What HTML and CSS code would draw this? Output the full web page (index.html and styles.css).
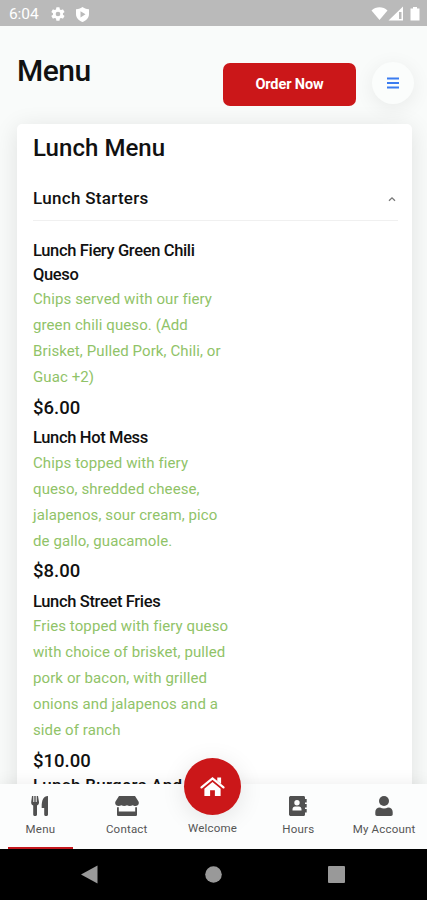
FILE: index.html
```html
<!DOCTYPE html>
<html lang="en">

<head>
    <meta charset="UTF-8">
    <meta name="viewport" content="width=device-width, initial-scale=1.0">
    <title>Menu</title>
    <link rel="stylesheet" href="styles.css">
</head>

<body>
    <div class="phone">
        <div class="status-bar">
            <span class="time">6:04</span>
            <svg class="gear" width="16" height="16" viewBox="0 0 24 24"><path fill="#fff" fill-rule="evenodd" d="M19.4 13a7.500 7.500 0 0 0 0-2l2.100-1.600a.5.5 0 0 0 .1-.7l-2-3.400a.5.5 0 0 0-.6-.2l-2.500 1a7 7 0 0 0-1.700-1l-.4-2.600a.5.5 0 0 0-.5-.5h-4a.5.5 0 0 0-.5.5L9 5.100a8 8 0 0 0-1.700 1l-2.500-1a.5.5 0 0 0-.6.2l-2 3.400a.5.5 0 0 0 .1.700L4.500 11a8 8 0 0 0 0 2l-2.200 1.600a.5.5 0 0 0-.1.700l2 3.400c.1.200.4.300.6.200l2.500-1a7 7 0 0 0 1.700 1l.4 2.600c0 .3.200.5.5.5h4c.300 0 .5-.2.5-.5l.4-2.600a8 8 0 0 0 1.700-1l2.500 1c.2.100.5 0 .6-.2l2-3.400a.5.5 0 0 0-.1-.7zM12 15.500a3.500 3.500 0 1 1 0-7 3.500 3.500 0 0 1 0 7z"/></svg>
            <svg class="shield" width="15" height="17" viewBox="0 0 15 17"><path fill="#fff" fill-rule="evenodd" d="M7.500 1C6 2.200 4 3 1 3.200V8c0 4 3 6.800 6.500 8C11 14.800 14 12 14 8V3.200C11 3 9 2.200 7.500 1zM5.500 5.200v6.200l5-3.100z"/></svg>
            <svg class="signals" width="50" height="16" viewBox="0 0 50 16">
                <path fill="#fff" d="M.5 4.500C5 .300 12 .300 16.500 4.500L8.500 14z"/>
                <path fill="#fff" d="M17.500 14.500L32 .500v14zM28 6v7h2.500V6z" fill-rule="evenodd"/>
                <path fill="#fff" d="M42 1h4v1.500h2.500v12h-9v-12H42z"/>
            </svg>
        </div>

        <div class="app">
            <header class="header">
                <h1>Menu</h1>
                <button class="order-btn">Order Now</button>
                <button class="menu-btn">
                    <svg width="12" height="12" viewBox="0 0 12 12"><path d="M0 1.500h12M0 6h12M0 10.500h12" stroke="#3a7cf0" stroke-width="1.800"/></svg>
                </button>
            </header>

            <main class="card">
                <h2>Lunch Menu</h2>
                <div class="section-title">
                    <h3>Lunch Starters</h3>
                    <svg width="8" height="6" viewBox="0 0 8 6"><path d="M1 4.800L4 1.800l3 3" fill="none" stroke="#777" stroke-width="1.300"/></svg>
                </div>
                <div class="item">
                    <h4>Lunch Fiery Green Chili<br>Queso</h4>
                    <p>Chips served with our fiery<br>green chili queso. (Add<br>Brisket, Pulled Pork, Chili, or<br>Guac +2)</p>
                    <div class="price">$6.00</div>
                </div>
                <div class="item">
                    <h4>Lunch Hot Mess</h4>
                    <p>Chips topped with fiery<br>queso, shredded cheese,<br>jalapenos, sour cream, pico<br>de gallo, guacamole.</p>
                    <div class="price">$8.00</div>
                </div>
                <div class="item">
                    <h4>Lunch Street Fries</h4>
                    <p>Fries topped with fiery queso<br>with choice of brisket, pulled<br>pork or bacon, with grilled<br>onions and jalapenos and a<br>side of ranch</p>
                    <div class="price">$10.00</div>
                </div>
                <h3 class="next-title">Lunch Burgers And</h3>
            </main>
        </div>

        <nav class="tabs">
            <a class="tab active">
                <svg width="18" height="20" viewBox="0 0 18 20"><path fill="#505050" d="M1 0h1.300v6h1V0h1.400v6h1V0H7l1 6c.2 2-.8 3-2 3.600V18.500c0 2-3.800 2-3.800 0V9.600C.8 9 0 8 .2 6zM17 0v18.500c0 2-3.800 2-3.800 0V12h-2.500C10.500 5 12 0 17 0z"/></svg>
                <span>Menu</span>
            </a>
            <a class="tab">
                <svg width="24" height="20" viewBox="0 0 24 20"><path fill="#505050" d="M4 0h16l3.500 5.500c1.200 2.500-1 4.500-3 4.500-1.300 0-2-.3-2.800-.8-1.700 1.100-4.200 1.100-5.700 0-1.600 1.100-4 1.100-5.700 0-.8.5-1.600.8-2.800.8-2 0-4.200-2-3-4.500zM2 11.300l1.800-.1V15.500h16.400v-4.300l1.800.1v7.200c0 1-.6 1.500-1.500 1.500h-17C2.600 20 2 19.500 2 18.500z"/></svg>
                <span>Contact</span>
            </a>
            <a class="tab home">
                <i class="home-circle">
                    <svg width="25" height="21" viewBox="0 0 26 22"><path d="M1.500 12L13 2.500 24.500 12" fill="none" stroke="#fff" stroke-width="2.300" stroke-linecap="round"/><path fill="#fff" d="M18 1.500h4v7l-4-3.300zM13 6.300l8.500 7V21h-6v-6h-5v6h-6v-7.700z"/></svg>
                </i>
                <span>Welcome</span>
            </a>
            <a class="tab">
                <svg width="18" height="20" viewBox="0 0 18 20"><path fill="#505050" fill-rule="evenodd" d="M2 0h12.500c1 0 1.500.7 1.500 1.500v17c0 .8-.5 1.500-1.500 1.500H2c-1.200 0-2-.7-2-1.500v-17C0 .700.800 0 2 0zM8 4a2.700 2.700 0 1 0 0 5.400A2.700 2.700 0 0 0 8 4zM3.500 14.500h9v-1c0-2-1.200-3-2.500-3H6c-1.300 0-2.500 1-2.500 3z"/><path fill="#505050" d="M16 3h1.700v3.500H16zM16 8h1.700v3.500H16zM16 13h1.700v3.500H16z"/></svg>
                <span>Hours</span>
            </a>
            <a class="tab">
                <svg width="18" height="20" viewBox="0 0 18 20"><circle cx="9" cy="5" r="5" fill="#505050"/><path fill="#505050" d="M5 11.500c2.500 1.200 5.500 1.200 8 0 3 0 4.700 2 4.700 4.500v2.300c0 1-.7 1.700-1.700 1.700H2C1 20 .3 19.300.3 18.300V16c0-2.500 1.700-4.500 4.700-4.500z"/></svg>
                <span>My Account</span>
            </a>
        </nav>

        <div class="system-nav">
            <svg width="17" height="19" viewBox="0 0 17 19"><path fill="#999" d="M0 9.500L16.500.500v18z"/></svg>
            <svg width="17" height="17" viewBox="0 0 17 17"><circle cx="8.500" cy="8.500" r="8.300" fill="#999"/></svg>
            <svg width="17" height="17" viewBox="0 0 17 17"><rect width="17" height="17" rx="1" fill="#999"/></svg>
        </div>
    </div>
</body>

</html>
```
FILE: styles.css
```css
* {
    box-sizing: border-box;
    margin: 0;
    padding: 0;
}

body {
    font-family: Roboto, "Liberation Sans", sans-serif;
    color: #111;
}

.phone {
    display: flex;
    flex-direction: column;
    width: 427px;
    height: 900px;
    overflow: hidden;
}

.status-bar {
    display: flex;
    align-items: center;
    height: 26px;
    flex-shrink: 0;
    padding: 2px 6px 0 9px;
    background-color: #bababa;
    color: #fff;
}

.time {
    width: 41px;
    font-size: 15.5px;
    letter-spacing: -0.1px;
}

.shield {
    margin-left: 9px;
}

.signals {
    margin-left: auto;
}

.app {
    height: 758px;
    flex-shrink: 0;
    overflow: hidden;
    background-color: #f9fbfa;
}

.header {
    display: flex;
    height: 98px;
    padding: 0 13px 0 17px;
}

.header h1 {
    width: 206px;
    padding-top: 27px;
    font-size: 30px;
    font-weight: 500;
    line-height: 36px;
    letter-spacing: -0.5px;
}

.order-btn {
    width: 133px;
    height: 43px;
    margin-top: 36.5px;
    padding-top: 1px;
    border: none;
    border-radius: 7px;
    background-color: #cb1719;
    color: #fff;
    font-family: inherit;
    font-size: 14.5px;
    font-weight: 700;
    letter-spacing: -0.1px;
}

.menu-btn {
    display: flex;
    align-items: center;
    justify-content: center;
    width: 42px;
    height: 42px;
    margin: 36px 0 0 16px;
    border: none;
    border-radius: 50%;
    background-color: #fbfdfc;
    box-shadow: 0 4px 20px rgba(0, 0, 0, 0.07);
}

.card {
    width: 395px;
    height: 720px;
    margin-left: 17px;
    padding: 8px 14px 0 16px;
    border-radius: 5px;
    background-color: #fff;
    box-shadow: 0 4px 24px rgba(0, 0, 0, 0.11);
}

.card h2 {
    font-size: 24px;
    font-weight: 500;
    line-height: 32px;
    letter-spacing: 0.05px;
}

.section-title {
    display: flex;
    align-items: center;
    justify-content: space-between;
    height: 57px;
    margin-bottom: 17.5px;
    padding: 11px 2px 0 0;
    border-bottom: 1px solid #f0f0f0;
}

.card h3 {
    font-size: 17px;
    font-weight: 500;
    line-height: 24px;
    letter-spacing: 0.3px;
}

.section-title svg {
    margin-top: 3px;
}

.item {
    width: 210px;
    white-space: nowrap;
}

.item h4 {
    font-size: 16.5px;
    font-weight: 500;
    line-height: 24px;
    letter-spacing: -0.35px;
}

.item p {
    margin: -0.5px 0 0.5px;
    color: #90c368;
    font-size: 15px;
    line-height: 26px;
    letter-spacing: 0.1px;
}

.price {
    height: 35.5px;
    font-size: 18.5px;
    font-weight: 500;
    line-height: 34px;
}

.card .next-title {
    margin-top: -6px;
}

.tabs {
    display: flex;
    height: 65px;
    flex-shrink: 0;
    position: relative;
    padding: 0 0 0 8px;
    background-color: #fcfdfd;
    box-shadow: 0 0 16px rgba(0, 0, 0, 0.08);
}

.tab {
    display: flex;
    flex-direction: column;
    align-items: center;
    width: 86px;
    padding-top: 12px;
    color: #555;
    font-size: 11.5px;
    letter-spacing: 0.2px;
    white-space: nowrap;
}

.tab span {
    margin-top: 6px;
    line-height: 15px;
}

.tab.active {
    width: 65px;
    margin-right: 11px;
    border-bottom: 2px solid #c4161c;
}

.tab.home {
    padding-top: 0;
}

.home-circle {
    display: flex;
    align-items: center;
    justify-content: center;
    width: 57px;
    height: 57px;
    margin-top: -26px;
    border-radius: 50%;
    background-color: #cb1719;
    box-shadow: 0 4px 24px rgba(0, 0, 0, 0.1);
}

.system-nav {
    display: flex;
    align-items: center;
    justify-content: space-between;
    height: 51px;
    flex-shrink: 0;
    padding: 0 82px 0 81px;
    background-color: #000;
}
```
